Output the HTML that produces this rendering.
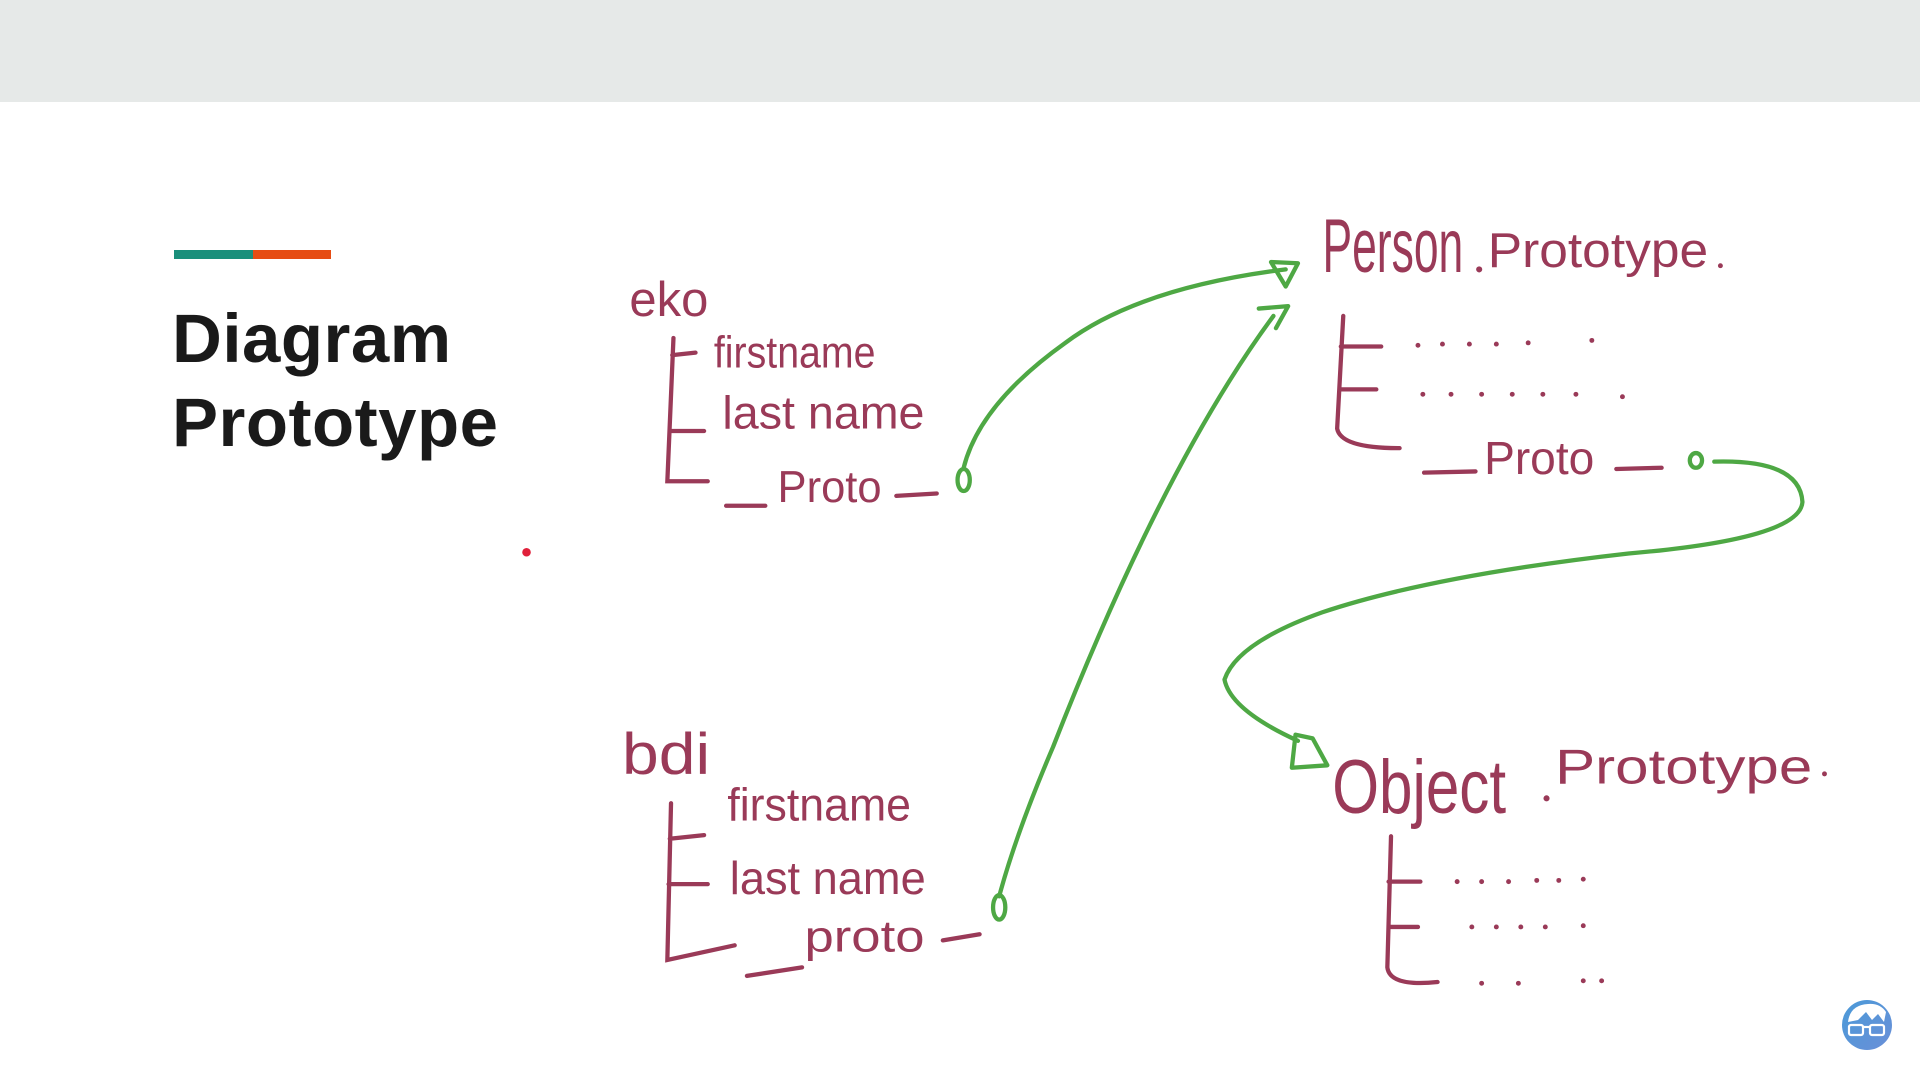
<!DOCTYPE html>
<html><head><meta charset="utf-8"><style>
html,body{margin:0;padding:0;width:1920px;height:1080px;overflow:hidden;background:#fff}
.top{position:absolute;left:0;top:0;width:1920px;height:102px;background:#e6e9e8}
.bar1{position:absolute;left:174px;top:250px;width:79px;height:9px;background:#1a8f7b}
.bar2{position:absolute;left:253px;top:250px;width:78px;height:9px;background:#e64d14}
.title{position:absolute;left:172px;top:297px;font-family:"Liberation Sans",sans-serif;font-weight:bold;font-size:69px;line-height:84px;color:#1a1a1a;letter-spacing:0.5px}
svg{position:absolute;left:0;top:0}
.h{font-family:"Liberation Sans",sans-serif;fill:#9a3a58}
</style></head><body>
<div class="top"></div>
<div class="bar1"></div><div class="bar2"></div>
<div class="title">Diagram<br>Prototype</div>
<svg width="1920" height="1080" viewBox="0 0 1568 882">
<g fill="none" stroke="#9a3a58" stroke-width="3.5" stroke-linecap="round">
<path d="M550 276 L545 393 L578 393 M549 290 L568 288 M547 352 L575 352"/>
<path d="M593 413 L625 413 M732 405 L765 403"/>
<path d="M1097 258 L1092 350 Q1095 366 1143 366 M1095 283 L1128 283 M1094 318 L1124 318"/>
<path d="M1163 386 L1205 385 M1320 383 L1357 382"/>
<path d="M548 656 L545 784 L600 772 M547 685 L575 682 M546 722 L578 722"/>
<path d="M610 797 L655 790 M770 768 L800 763"/>
<path d="M1136 683 L1133 790 Q1135 806 1174 802 M1134 720 L1160 720 M1134 757 L1158 757"/>
</g>
<g fill="#9a3a58">
<circle cx="1158" cy="282" r="2"/><circle cx="1178" cy="281" r="2"/><circle cx="1200" cy="281" r="2"/><circle cx="1222" cy="281" r="2"/><circle cx="1248" cy="280" r="2"/><circle cx="1300" cy="278" r="2"/>
<circle cx="1162" cy="322" r="2"/><circle cx="1185" cy="322" r="2"/><circle cx="1210" cy="322" r="2"/><circle cx="1235" cy="322" r="2"/><circle cx="1260" cy="322" r="2"/><circle cx="1287" cy="322" r="2"/><circle cx="1325" cy="324" r="2"/>
<circle cx="1190" cy="720" r="2"/><circle cx="1210" cy="720" r="2"/><circle cx="1232" cy="720" r="2"/><circle cx="1255" cy="719" r="2"/><circle cx="1273" cy="719" r="2"/><circle cx="1293" cy="718" r="2"/>
<circle cx="1202" cy="757" r="2"/><circle cx="1222" cy="757" r="2"/><circle cx="1242" cy="757" r="2"/><circle cx="1262" cy="757" r="2"/><circle cx="1293" cy="756" r="2"/>
<circle cx="1210" cy="803" r="2"/><circle cx="1240" cy="803" r="2"/><circle cx="1293" cy="801" r="2"/><circle cx="1308" cy="801" r="2"/>
<circle cx="1405" cy="217" r="2"/><circle cx="1208" cy="220" r="2.5"/><circle cx="1490" cy="632" r="2"/><circle cx="1263" cy="652" r="2.5"/>
</g>
<text class="h" x="514" y="258" font-size="40">eko</text>
<text class="h" x="583" y="300" font-size="36" textLength="132" lengthAdjust="spacingAndGlyphs">firstname</text>
<text class="h" x="590" y="350" font-size="38" textLength="165" lengthAdjust="spacingAndGlyphs">last name</text>
<text class="h" x="635" y="410" font-size="36" textLength="85" lengthAdjust="spacingAndGlyphs">Proto</text>
<text class="h" x="1080" y="222" font-size="62" textLength="115" lengthAdjust="spacingAndGlyphs">Person</text>
<text class="h" x="1215" y="218" font-size="40" textLength="180" lengthAdjust="spacingAndGlyphs">Prototype</text>
<text class="h" x="1212" y="387" font-size="38" textLength="90" lengthAdjust="spacingAndGlyphs">Proto</text>
<text class="h" x="508" y="632" font-size="48" textLength="72" lengthAdjust="spacingAndGlyphs">bdi</text>
<text class="h" x="594" y="670" font-size="38" textLength="150" lengthAdjust="spacingAndGlyphs">firstname</text>
<text class="h" x="596" y="730" font-size="38" textLength="160" lengthAdjust="spacingAndGlyphs">last name</text>
<text class="h" x="657" y="777" font-size="36" textLength="98" lengthAdjust="spacingAndGlyphs">proto</text>
<text class="h" x="1088" y="664" font-size="62" textLength="142" lengthAdjust="spacingAndGlyphs">Object</text>
<text class="h" x="1270" y="640" font-size="40" textLength="210" lengthAdjust="spacingAndGlyphs">Prototype</text>
<g fill="none" stroke="#4ea844" stroke-width="3.5" stroke-linecap="round" stroke-linejoin="round">
<path d="M787 382 Q800 330 870 280 Q930 235 1050 220"/>
<path d="M1038 214 L1060 215 L1050 234 Z"/>
<ellipse cx="787" cy="392" rx="5" ry="9"/>
<path d="M816 732 Q830 680 860 610 Q950 380 1040 258"/>
<path d="M1028 252 L1052 250 L1042 268"/>
<ellipse cx="816" cy="741" rx="5" ry="10"/>
<path d="M1400 377 Q1470 375 1472 410 Q1470 440 1330 452 Q1170 470 1080 500 Q1010 525 1000 555 Q1005 580 1060 605"/>
<path d="M1058 600 L1072 603 L1084 625 L1055 627 Z"/>
<ellipse cx="1385" cy="376" rx="5" ry="6"/>
</g>
<circle cx="430" cy="451" r="3.5" fill="#e0203a"/>
</svg>
<svg width="1920" height="1080" style="left:0;top:0">
<defs><linearGradient id="g" x1="0" y1="0" x2="1" y2="1"><stop offset="0" stop-color="#4a9ad8"/><stop offset="1" stop-color="#6a8fd8"/></linearGradient></defs>
<circle cx="1867" cy="1025" r="25" fill="url(#g)"/>
<path d="M1848 1022 Q1850 1005 1868 1004 Q1880 1003 1886 1012 L1884 1022 L1878 1014 L1872 1020 L1866 1012 L1858 1020 Z" fill="#fff"/>
<g fill="none" stroke="#fff" stroke-width="2.2"><rect x="1849" y="1025" width="14" height="10" rx="2"/><rect x="1870" y="1025" width="14" height="10" rx="2"/><path d="M1863 1027 L1870 1027"/></g>
</svg>
</body></html>
